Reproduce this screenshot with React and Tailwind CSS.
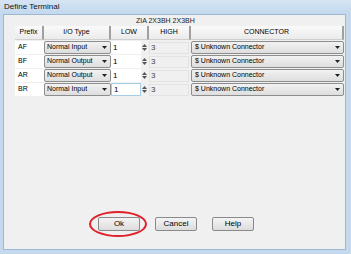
import React from "react";

const rows = [
  { p: "AF", t: "Normal Input", focus: false },
  { p: "BF", t: "Normal Output", focus: false },
  { p: "AR", t: "Normal Output", focus: false },
  { p: "BR", t: "Normal Input", focus: true },
];

function Arrow() {
  return (
    <svg width="5" height="3" viewBox="0 0 5 3" className="shrink-0">
      <path d="M0 0H5L2.5 3Z" fill="#222" />
    </svg>
  );
}

function Spin() {
  return (
    <div className="flex w-[7px] flex-col items-center justify-center gap-[1px]">
      <svg width="5" height="3" viewBox="0 0 5 3"><path d="M0 3H5L2.5 0Z" fill="#555" /></svg>
      <svg width="5" height="3" viewBox="0 0 5 3"><path d="M0 0H5L2.5 3Z" fill="#555" /></svg>
    </div>
  );
}

function Btn({ children }) {
  return (
    <div className="flex h-[14px] w-[42px] items-center justify-center rounded-[2px] border border-[#8a8a8a] bg-gradient-to-b from-[#f4f4f4] to-[#dcdcdc] text-[8px] text-black">
      {children}
    </div>
  );
}

export default function App() {
  return (
    <div
      className="flex h-[254px] w-[351px] flex-col bg-[#c4d9ee]"
      style={{ fontFamily: '"Liberation Sans", Arial, sans-serif' }}
    >
      <div className="flex h-[14px] items-center bg-gradient-to-b from-[#d6e5f4] to-[#c3d8ee] pl-[4px] text-[8px] text-[#111]">
        Define Terminal
      </div>
      <div className="ml-[3px] mr-[5px] mb-[4px] flex flex-1 flex-col border border-[#9db8d3] bg-[#f0f0f0]">
        <div className="flex h-[10px] items-center pl-[132px] pt-[2px] text-[7px] text-[#222]">
          ZIA 2X3BH 2X3BH
        </div>
        <div className="ml-[11px] mt-[1px] flex flex-col text-[8px] text-black">
          <div className="grid h-[14px] grid-cols-[29px_67px_38px_42px_153px]">
            {["Prefix", "I/O Type", "LOW", "HIGH", "CONNECTOR"].map((h) => (
              <div
                key={h}
                className="flex items-center justify-center border-r-2 border-b border-r-[#a0a0a0] border-b-[#d0d0d0] bg-gradient-to-b from-[#fafafa] to-[#ebebeb] text-[7px]"
              >
                {h}
              </div>
            ))}
          </div>
          <div className="mt-[1px] flex flex-col gap-[1px]">
            {rows.map((r) => (
              <div key={r.p} className="grid h-[13px] grid-cols-[29px_67px_38px_42px_153px]">
                <div className="flex items-center bg-white pl-[3px] text-[7px]">{r.p}</div>
                <div className="flex items-center justify-between rounded-[2px] border border-[#8d8d8d] bg-gradient-to-b from-[#f2f2f2] to-[#dedede] pl-[2px] pr-[3px] text-[7px]">
                  <span>{r.t}</span>
                  <Arrow />
                </div>
                <div className="flex items-center">
                  <div
                    className={
                      "flex h-[13px] w-[30px] items-center bg-white pl-[2px] text-[8px] " +
                      (r.focus ? "border border-[#a6cde8]" : "")
                    }
                  >
                    1
                  </div>
                  <Spin />
                </div>
                <div className="flex items-center">
                  <div className="flex h-[12px] w-[40px] items-center border border-[#e3e3e3] bg-[#f0f0f0] pl-[1px] text-[8px] text-[#444]">
                    3
                  </div>
                </div>
                <div className="flex items-center justify-between rounded-[2px] border border-[#8d8d8d] bg-gradient-to-b from-[#f2f2f2] to-[#dedede] pl-[3px] pr-[3px] text-[7px]">
                  <span>$ Unknown Connector</span>
                  <Arrow />
                </div>
              </div>
            ))}
          </div>
        </div>
        <div className="flex-1" />
        <div className="mb-[18px] ml-[94px] flex gap-[15px]">
          <div className="relative">
            <Btn>Ok</Btn>
            <div className="absolute left-[-9px] top-[-6px] h-[26px] w-[58px] rounded-[50%] border-2 border-[#e0202a]" />
          </div>
          <Btn>Cancel</Btn>
          <Btn>Help</Btn>
        </div>
      </div>
    </div>
  );
}
